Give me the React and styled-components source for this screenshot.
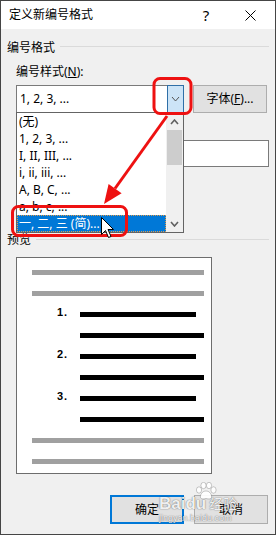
import React from "react";
import styled, { createGlobalStyle } from "styled-components";

const UI_FONT = `"Noto Sans", "Noto Sans CJK SC", sans-serif`;

const Global = createGlobalStyle`
  html, body { margin: 0; padding: 0; background: #fff; }
  body { font-family: ${UI_FONT}; }
  #root { width: 276px; height: 535px; }
`;

const Window = styled.div`
  position: relative;
  width: 276px;
  height: 535px;
  box-sizing: border-box;
  border: 1px solid #454545;
  display: flex;
  flex-direction: column;
  font: 12px/16px ${UI_FONT};
  color: #000;
  overflow: hidden;
`;

const TitleBar = styled.div`
  height: 28px;
  flex: none;
  background: #fff;
  display: flex;
  align-items: center;
  padding-left: 8px;
`;

const Title = styled.span`
  flex: 1;
  font-size: 12px;
`;

const CaptionBtn = styled.div`
  width: ${(p) => p.$w}px;
  height: 28px;
  display: flex;
  align-items: center;
  justify-content: center;
  font-size: 15px;
`;

const Body = styled.div`
  flex: 1;
  background: #f0f0f0;
  padding: 11px 6px 0 6px;
  display: flex;
  flex-direction: column;
`;

const GroupHeader = styled.div`
  height: 16px;
  display: flex;
  align-items: center;
  gap: 5px;
  margin-top: ${(p) => p.$mt || 0}px;
`;

const Rule = styled.div`
  flex: 1;
  height: 1px;
  background: #dadada;
  margin-bottom: ${(p) => p.$lift}px;
`;

const GroupContent = styled.div`
  padding: 0 0 0 9px;
  display: flex;
  flex-direction: column;
`;

const FieldLabel = styled.div`
  height: 16px;
  margin-top: ${(p) => p.$mt}px;
`;

const U = styled.span`
  text-decoration: underline;
`;

const ComboRow = styled.div`
  margin-top: 5px;
  display: flex;
  gap: 9px;
`;

const Combo = styled.div`
  position: relative;
  width: ${(p) => p.$w}px;
  height: ${(p) => p.$h || 28}px;
  margin-top: ${(p) => p.$mt || 0}px;
  box-sizing: border-box;
  border: 1px solid #7a7a7a;
  background: #fff;
  display: flex;
  align-items: center;
`;

const ComboText = styled.span`
  flex: 1;
  padding-left: 3px;
  white-space: nowrap;
`;

const ComboBtn = styled.div`
  width: 17px;
  align-self: stretch;
  box-sizing: border-box;
  margin: -1px -1px -1px 0;
  border: 1px solid ${(p) => (p.$open ? "#2f6fa7" : "transparent")};
  background: ${(p) => (p.$open ? "#cce4f7" : "transparent")};
  display: flex;
  align-items: center;
  justify-content: center;
`;

const List = styled.div`
  position: absolute;
  left: -1px;
  top: 26px;
  width: 168px;
  height: 121px;
  box-sizing: border-box;
  border: 1px solid #646464;
  background: #fff;
  display: flex;
  z-index: 2;
`;

const Items = styled.div`
  flex: 1;
  display: flex;
  flex-direction: column;
`;

const Item = styled.div`
  height: 17px;
  line-height: 17px;
  padding-left: 2px;
  white-space: nowrap;
  box-sizing: border-box;
  background: ${(p) => (p.$selected ? "#0078d7" : "transparent")};
  color: ${(p) => (p.$selected ? "#fff" : "#000")};
  outline: ${(p) => (p.$selected ? "1px dotted #e09a4a" : "none")};
  outline-offset: -1px;
`;

const ScrollBar = styled.div`
  width: 17px;
  background: #f0f0f0;
  display: flex;
  flex-direction: column;
`;

const ScrollArrow = styled.div`
  height: 17px;
  flex: none;
  display: flex;
  align-items: center;
  justify-content: center;
`;

const Track = styled.div`
  flex: 1;
  display: flex;
  flex-direction: column;
`;

const Thumb = styled.div`
  height: 35px;
  margin: 0 1px;
  background: #cdcdcd;
`;

const Button = styled.button`
  width: 74px;
  height: ${(p) => p.$h || 28}px;
  box-sizing: border-box;
  border: ${(p) => (p.$default ? "2px solid #0078d7" : "1px solid #adadad")};
  background: #e1e1e1;
  font: inherit;
  color: #000;
  padding: 0;
  margin: 0;
`;

const TextBox = styled.div`
  margin-top: ${(p) => p.$mt}px;
  height: 27px;
  box-sizing: border-box;
  border: 1px solid #7a7a7a;
  background: #fff;
`;

const PreviewBox = styled.div`
  margin: 9px 0 0 9px;
  width: 196px;
  height: 217px;
  box-sizing: border-box;
  border: 1px solid #6d6d6d;
  background: #fff;
  padding: 12px 7px 0 15px;
  display: flex;
  flex-direction: column;
`;

const PRow = styled.div`
  height: 21px;
  flex: none;
  display: grid;
  grid-template-columns: 48px 1fr;
  align-items: start;
`;

const Bar = styled.div`
  grid-column: ${(p) => (p.$span ? "1 / -1" : "2")};
  grid-row: 1;
  height: 5px;
  width: ${(p) => (p.$w ? `${p.$w}px` : "auto")};
  background: ${(p) => (p.$gray ? "#a0a0a0" : "#000")};
`;

const Num = styled.span`
  grid-column: 1;
  grid-row: 1;
  padding-left: 25px;
  margin-top: -5px;
  font: bold 11px/11px "Liberation Sans", Arial, sans-serif;
  letter-spacing: 1px;
  color: #000;
`;

const ButtonRow = styled.div`
  margin-top: 21px;
  display: flex;
  justify-content: flex-end;
  gap: 10px;
  padding-right: 1px;
`;

const Overlay = styled.svg`
  position: absolute;
  left: -1px;
  top: -1px;
  pointer-events: none;
  z-index: 10;
`;

const Watermark = styled.div`
  position: absolute;
  left: 158px;
  top: 479px;
  width: 100px;
  height: 50px;
  pointer-events: none;
  z-index: 9;
  color: rgba(255, 255, 255, 0.92);
  text-shadow: 0 0 1px rgba(0, 0, 0, 0.55), 0 0 2px rgba(0, 0, 0, 0.2);
`;

const WmLine = styled.div`
  display: flex;
  align-items: baseline;
  margin-top: ${(p) => p.$mt}px;
  font: ${(p) => p.$font};
  white-space: nowrap;
`;

const WmCn = styled.span`
  font: 14px/18px "Noto Sans CJK SC", sans-serif;
  margin-left: 3px;
`;

const Paw = styled.svg`
  position: absolute;
  left: 36px;
  top: 2px;
`;

const Chevron = ({ up, color = "#555", w = 7, sw = 1 }) => (
  <svg width={w + 2} height="6" viewBox={`0 0 ${w + 2} 6`}>
    <path
      d={up ? `M1 5L${(w + 2) / 2} 1L${w + 1} 5` : `M1 1L${(w + 2) / 2} 5L${w + 1} 1`}
      fill="none"
      stroke={color}
      strokeWidth={sw}
    />
  </svg>
);

const listItems = ["(无)", "1, 2, 3, ...", "I, II, III, ...", "i, ii, iii, ...", "A, B, C, ...", "a, b, c, ...", "一, 二, 三 (简)..."];

const rows = [
  { type: "gray" },
  { type: "gray" },
  { type: "short", num: "1." },
  { type: "full" },
  { type: "short", num: "2." },
  { type: "full" },
  { type: "short", num: "3." },
  { type: "full" },
  { type: "gray" },
  { type: "gray" },
];

export default function App() {
  return (
    <>
      <Global />
      <Window>
        <TitleBar>
          <Title>定义新编号格式</Title>
          <CaptionBtn $w={38}>?</CaptionBtn>
          <CaptionBtn $w={50}>
            <svg width="11" height="11" viewBox="0 0 11 11">
              <path d="M0.5 0.5L10.5 10.5M10.5 0.5L0.5 10.5" stroke="#000" strokeWidth="1" />
            </svg>
          </CaptionBtn>
        </TitleBar>
        <Body>
          <GroupHeader>
            <span>编号格式</span>
            <Rule $lift={4} />
          </GroupHeader>
          <GroupContent>
            <FieldLabel $mt={8}>
              编号样式(<U>N</U>):
            </FieldLabel>
            <ComboRow>
              <Combo $w={168}>
                <ComboText>1, 2, 3, ...</ComboText>
                <ComboBtn $open>
                  <Chevron color="#555" />
                </ComboBtn>
                <List>
                  <Items>
                    {listItems.map((t, i) => (
                      <Item key={t} $selected={i === listItems.length - 1}>
                        {t}
                      </Item>
                    ))}
                  </Items>
                  <ScrollBar>
                    <ScrollArrow>
                      <Chevron up color="#606060" sw={1.6} />
                    </ScrollArrow>
                    <Track>
                      <Thumb />
                    </Track>
                    <ScrollArrow>
                      <Chevron color="#606060" sw={1.6} />
                    </ScrollArrow>
                  </ScrollBar>
                </List>
              </Combo>
              <Button>
                字体(<U>F</U>)...
              </Button>
            </ComboRow>
            <TextBox $mt={27} />
            <Combo $w={120} $h={24} $mt={24} />
          </GroupContent>
          <GroupHeader $mt={17}>
            <span>预览</span>
            <Rule $lift={2} />
          </GroupHeader>
          <PreviewBox>
            {rows.map((r, i) => (
              <PRow key={i}>
                {r.num && <Num>{r.num}</Num>}
                {r.type === "gray" && <Bar $span $gray />}
                {r.type === "short" && <Bar $w={116} />}
                {r.type === "full" && <Bar />}
              </PRow>
            ))}
          </PreviewBox>
          <ButtonRow>
            <Button $default $h={29}>确定</Button>
            <Button $h={29}>取消</Button>
          </ButtonRow>
        </Body>
        <Watermark>
          <Paw width="22" height="18" viewBox="0 0 22 18">
            <g fill="rgba(255,255,255,0.92)" stroke="rgba(0,0,0,0.3)" strokeWidth="0.7">
              <ellipse cx="4" cy="8" rx="2.6" ry="3.2" />
              <ellipse cx="8.5" cy="3.5" rx="2.6" ry="3.2" />
              <ellipse cx="14" cy="3.5" rx="2.6" ry="3.2" />
              <ellipse cx="18.5" cy="8" rx="2.6" ry="3.2" />
              <path d="M11 9 C7 9 5 13 5.5 15.5 C6 17.5 9 17 11 16.5 C13 17 16 17.5 16.5 15.5 C17 13 15 9 11 9Z" />
            </g>
          </Paw>
          <WmLine $mt={14} $font={`bold 17px/18px "Liberation Sans", Arial, sans-serif`}>
            Baidu
            <WmCn>经验</WmCn>
          </WmLine>
          <WmLine $mt={0} $font={`9px/11px "Liberation Sans", Arial, sans-serif`}>jingyan.baidu.com</WmLine>
        </Watermark>
        <Overlay width="276" height="535" viewBox="0 0 276 535">
          <rect x="154" y="78.5" width="37" height="35" rx="6" fill="none" stroke="#ee1111" strokeWidth="3" />
          <rect x="12.5" y="206.5" width="114" height="29" rx="6" fill="none" stroke="#ee1111" strokeWidth="3" />
          <line x1="167" y1="116" x2="115" y2="188.5" stroke="#ee1111" strokeWidth="3" />
          <polygon points="104,204 121.6,193.2 108.6,183.9" fill="#ee1111" />
          <path
            d="M101.5 217.5 L101.5 234.5 L105.5 230.5 L108.5 237.5 L111 236.5 L108 229.5 L113.5 229.5 Z"
            fill="#fff"
            stroke="#000"
            strokeWidth="1"
            strokeLinejoin="round"
          />
        </Overlay>
      </Window>
    </>
  );
}
